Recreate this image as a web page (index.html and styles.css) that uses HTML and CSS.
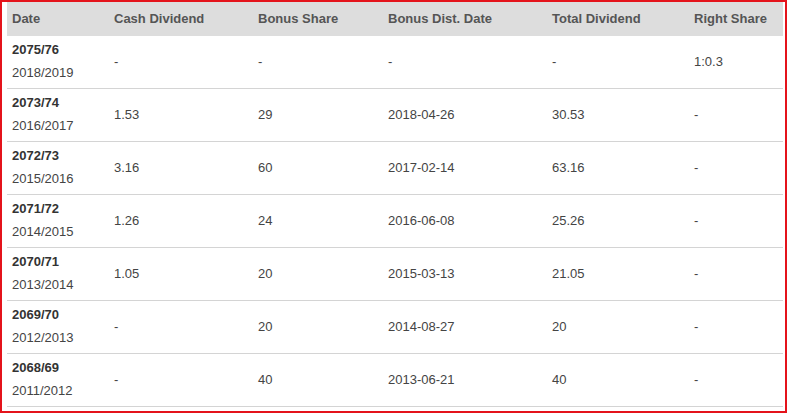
FILE: index.html
```html
<!DOCTYPE html>
<html>
<head>
<meta charset="utf-8">
<link rel="stylesheet" href="styles.css">
</head>
<body>
<div class="frame">
<table class="div-table">
<colgroup>
<col class="c1"><col class="c2"><col class="c3"><col class="c4"><col class="c5"><col class="c6">
</colgroup>
<thead>
<tr><th>Date</th><th>Cash Dividend</th><th>Bonus Share</th><th>Bonus Dist. Date</th><th>Total Dividend</th><th>Right Share</th></tr>
</thead>
<tbody>
<tr><td class="date"><strong>2075/76</strong><br>2018/2019</td><td>-</td><td>-</td><td>-</td><td>-</td><td>1:0.3</td></tr>
<tr><td class="date"><strong>2073/74</strong><br>2016/2017</td><td>1.53</td><td>29</td><td>2018-04-26</td><td>30.53</td><td>-</td></tr>
<tr><td class="date"><strong>2072/73</strong><br>2015/2016</td><td>3.16</td><td>60</td><td>2017-02-14</td><td>63.16</td><td>-</td></tr>
<tr><td class="date"><strong>2071/72</strong><br>2014/2015</td><td>1.26</td><td>24</td><td>2016-06-08</td><td>25.26</td><td>-</td></tr>
<tr><td class="date"><strong>2070/71</strong><br>2013/2014</td><td>1.05</td><td>20</td><td>2015-03-13</td><td>21.05</td><td>-</td></tr>
<tr><td class="date"><strong>2069/70</strong><br>2012/2013</td><td>-</td><td>20</td><td>2014-08-27</td><td>20</td><td>-</td></tr>
<tr><td class="date"><strong>2068/69</strong><br>2011/2012</td><td>-</td><td>40</td><td>2013-06-21</td><td>40</td><td>-</td></tr>
</tbody>
</table>
</div>
</body>
</html>
```
FILE: styles.css
```css
html, body {
  margin: 0;
  padding: 0;
  background: #fff;
}
.frame {
  width: 787px;
  height: 413px;
  box-sizing: border-box;
  border: 2px solid #e4131b;
  padding: 0 2px 0 5px;
  font-family: "Liberation Sans", Arial, sans-serif;
  font-size: 13px;
  color: #444;
}
.div-table {
  width: 776px;
  border-collapse: collapse;
  table-layout: fixed;
}
.c1 { width: 102px; }
.c2 { width: 144px; }
.c3 { width: 130px; }
.c4 { width: 164px; }
.c5 { width: 142px; }
.c6 { width: 94px; }
th {
  background: #dddddd;
  color: #555;
  font-weight: bold;
  text-align: left;
  height: 34px;
  padding: 0 5px 1px;
  line-height: 18px;
  vertical-align: middle;
  box-sizing: border-box;
}
td {
  padding: 2px 5px 4px;
  line-height: 23px;
  border-bottom: 1px solid #d4d4d4;
  vertical-align: middle;
  color: #444;
}
td strong {
  color: #333;
}
```
